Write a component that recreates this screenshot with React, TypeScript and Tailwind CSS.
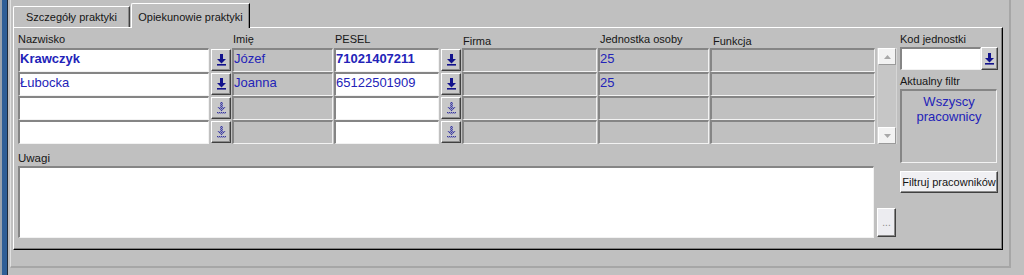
import React from 'react';

interface Row {
  nazwisko: string;
  imie: string;
  pesel: string;
  jednostka: string;
  bold: boolean;
  active: boolean;
}

const rows: Row[] = [
  { nazwisko: 'Krawczyk', imie: 'Józef', pesel: '71021407211', jednostka: '25', bold: true, active: true },
  { nazwisko: 'Łubocka', imie: 'Joanna', pesel: '65122501909', jednostka: '25', bold: false, active: true },
  { nazwisko: '', imie: '', pesel: '', jednostka: '', bold: false, active: false },
  { nazwisko: '', imie: '', pesel: '', jednostka: '', bold: false, active: false },
];

const sunken =
  'border-t-2 border-l-2 border-b border-r border-t-[#858585] border-l-[#858585] border-b-[#f2f2f2] border-r-[#f2f2f2]';
const raised =
  'border border-t-white border-l-white border-b-[#404040] border-r-[#404040] shadow-[inset_-1px_-1px_0_#8a8a8a]';
const dataText = 'text-[13px] leading-[16px] pt-[1px] text-[#2323b8] whitespace-nowrap overflow-hidden';

const ArrowIcon = ({ off }: { off?: boolean }) => {
  const fill = off ? 'url(#dith)' : '#12128c';
  return (
    <svg width="9" height="12" viewBox="0 0 9 12">
      <rect x="3" y="0" width="3" height="5" fill={fill} />
      <polygon points="0,5 9,5 4.5,9.5" fill={fill} />
      <rect x="0" y="10" width="9" height="1.6" fill={fill} />
    </svg>
  );
};

const PickButton = ({ off }: { off?: boolean }) => (
  <div className="w-[23px] h-[24px] flex items-center">
    <div className={`ml-[2px] w-[20px] h-[22px] bg-[#c8c8c8] flex items-center justify-center ${raised}`}>
      <ArrowIcon off={off} />
    </div>
  </div>
);

const ScrollArrow = ({ up }: { up?: boolean }) => (
  <div className="h-[17px] bg-[#f2f2f2] border border-t-white border-l-white border-b-[#9a9a9a] border-r-[#9a9a9a] flex items-center justify-center">
    <svg width="7" height="4" viewBox="0 0 7 4">
      <polygon points={up ? '0,4 7,4 3.5,0' : '0,0 7,0 3.5,4'} fill="#a8a8a8" />
    </svg>
  </div>
);

export default function App() {
  return (
    <div className="w-[1024px] h-[275px] overflow-hidden bg-[#c0c0c0] flex font-['Liberation_Sans',Arial,sans-serif] text-[11px] text-[#161616]">
      <svg width="0" height="0" className="shrink-0">
        <defs>
          <pattern id="dith" width="2" height="2" patternUnits="userSpaceOnUse">
            <rect width="2" height="2" fill="#9a9ac4" />
            <rect width="1" height="1" fill="#3a3a9a" />
            <rect x="1" y="1" width="1" height="1" fill="#5a5aaa" />
          </pattern>
        </defs>
      </svg>

      {/* window frame */}
      <div className="w-[8px] h-full shrink-0 bg-[#2f5f97] border-l-2 border-l-[#9aa3ad] border-r border-r-[#1e2a38]" />

      <div className="ml-[2px] w-[1001px] h-[268px] shrink-0 flex flex-col pl-[2px] border-l border-l-[#e0e0e0] border-r-2 border-r-[#a6a6a6] border-b-2 border-b-[#a6a6a6]">
        {/* tabs */}
        <div className="h-[27px] flex items-end">
          <div className="w-[117px] h-[21px] flex items-center justify-center border-t border-l border-r border-t-white border-l-white border-r-[#404040] shadow-[inset_-1px_0_0_#8a8a8a] rounded-tl-[2px]">
            Szczegóły praktyki
          </div>
          <div className="relative z-10 -mb-px ml-px w-[119px] h-[25px] pt-[2px] bg-[#c0c0c0] flex items-center justify-center border-t border-l border-r border-t-white border-l-white border-r-black shadow-[inset_-1px_0_0_#8a8a8a] rounded-tl-[2px]">
            Opiekunowie praktyki
          </div>
        </div>

        {/* tab page */}
        <div className="w-[990px] h-[223px] flex pl-[4px] border border-t-white border-l-white border-r-black border-b-black shadow-[inset_-1px_-1px_0_#808080]">
          <div className="w-[879px] flex flex-col">
            {/* column labels */}
            <div className="h-[20px] flex leading-[13px]">
              <div className="w-[191px] pt-[5px]">Nazwisko</div>
              <div className="w-[23px]" />
              <div className="w-[101px] pl-px pt-[5px]">Imię</div>
              <div className="w-[106px] pl-[2px] pt-[5px]">PESEL</div>
              <div className="w-[23px]" />
              <div className="w-[136px] pl-px pt-[7px]">Firma</div>
              <div className="w-[112px] pl-[2px] pt-[5px]">Jednostka osoby</div>
              <div className="w-[166px] pl-[3px] pt-[7px]">Funkcja</div>
            </div>

            {/* grid */}
            <div className="flex">
              <div className="w-[857px] flex flex-col">
                {rows.map((r, i) => (
                  <div key={i} className="h-[24px] flex">
                    <div className={`w-[191px] h-[24px] bg-white ${sunken} ${dataText} ${r.bold ? 'font-bold' : ''}`}>{r.nazwisko}</div>
                    <PickButton off={!r.active} />
                    <div className={`w-[101px] h-[24px] bg-[#c0c0c0] ${sunken} ${dataText}`}>{r.imie}</div>
                    <div className={`ml-px w-[105px] h-[24px] bg-white ${sunken} ${dataText} text-[12.5px] ${r.bold ? 'font-bold' : ''}`}>{r.pesel}</div>
                    <PickButton off={!r.active} />
                    <div className={`w-[135px] h-[24px] bg-[#c0c0c0] ${sunken}`} />
                    <div className={`ml-px w-[111px] h-[24px] bg-[#c0c0c0] ${sunken} ${dataText}`}>{r.jednostka}</div>
                    <div className={`ml-px w-[165px] h-[24px] bg-[#c0c0c0] ${sunken}`} />
                  </div>
                ))}
              </div>
              <div className="ml-[2px] w-[20px] h-[96px] flex flex-col justify-between bg-[#c6c6c6] border-l border-r border-l-[#d6d6d6] border-r-[#d6d6d6]">
                <ScrollArrow up />
                <ScrollArrow />
              </div>
            </div>

            {/* notes */}
            <div className="mt-[8px] h-[13px] leading-[13px] text-[11.5px]">Uwagi</div>
            <div className="mt-[1px] flex items-end">
              <div className={`w-[856px] h-[72px] bg-white ${sunken}`} />
              <div className={`ml-[3px] mb-px w-[19px] h-[29px] bg-[#ececf0] flex items-center justify-center text-[10px] text-[#8a8a8a] ${raised}`}>
                ...
              </div>
            </div>
          </div>

          {/* right column */}
          <div className="ml-[3px] w-[98px] flex flex-col">
            <div className="h-[19px] pt-[5px] leading-[13px]">Kod jednostki</div>
            <div className="flex h-[23px]">
              <div className={`w-[81px] h-[23px] bg-white ${sunken}`} />
              <div className={`w-[17px] h-[23px] bg-[#cfcfcf] flex items-center justify-center ${raised}`}>
                <ArrowIcon />
              </div>
            </div>
            <div className="mt-[5px] h-[13px] leading-[13px]">Aktualny filtr</div>
            <div className={`mt-px w-[97px] h-[74px] pt-[3px] bg-[#c0c0c0] ${sunken} text-center text-[13px] leading-[15px] text-[#2323b8]`}>
              Wszyscy
              <br />
              pracownicy
            </div>
            <div className={`mt-[8px] w-[98px] h-[22px] bg-[#f0f0f3] flex items-center justify-center text-[11px] text-[#141414] whitespace-nowrap ${raised}`}>
              Filtruj pracowników
            </div>
          </div>
        </div>
      </div>
    </div>
  );
}
